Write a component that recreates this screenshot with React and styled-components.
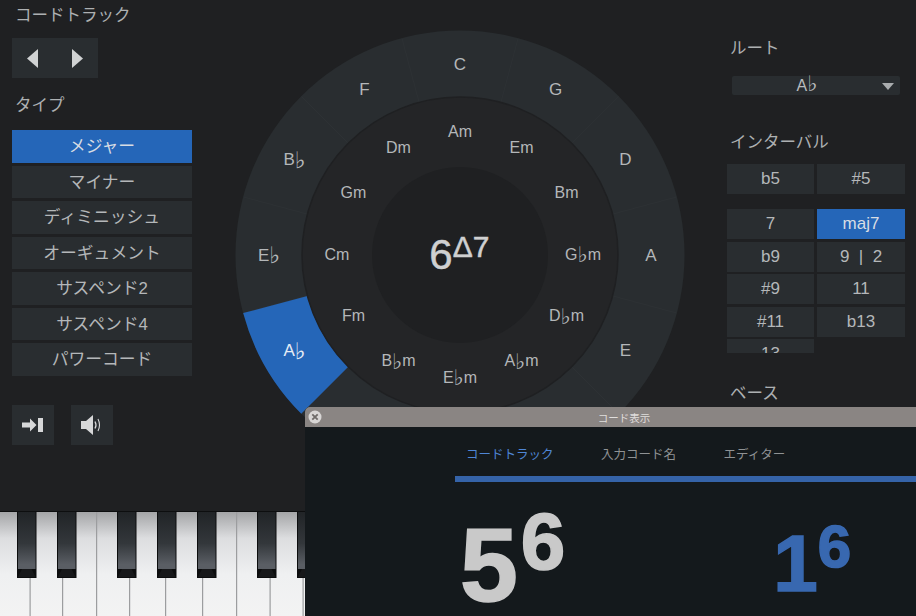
import styled, { createGlobalStyle } from "styled-components";

const GlobalStyle = createGlobalStyle`
  html, body {
    margin: 0;
    padding: 0;
    background: #1f2022;
  }
`;

const FONT = `"Liberation Sans", "DejaVu Sans", "Noto Sans CJK JP", sans-serif`;
const BLUE = "#2566b8";

const Page = styled.div`
  position: relative;
  width: 916px;
  height: 616px;
  overflow: hidden;
  display: flex;
  flex-direction: column;
  font-family: ${FONT};
  color: #b9bcbe;
  background: #1f2022;
`;

const Panel = styled.div`
  height: 511px;
  flex: none;
  display: grid;
  grid-template-columns: 180px 535px 178px;
  padding-left: 12px;
  border-bottom: 1px solid #0d0e0f;
`;

const LeftColumn = styled.div`
  display: flex;
  flex-direction: column;
`;

const RightColumn = styled.div`
  display: flex;
  flex-direction: column;
`;

const Heading = styled.div`
  font-size: 16.5px;
  line-height: 20px;
  color: #adb0b2;
  margin-left: 3px;
  margin-top: ${(p) => p.$top || 0}px;
`;

const ArrowBox = styled.div`
  width: 86px;
  height: 40px;
  margin-top: 13px;
  background: #292d30;
  display: flex;
  align-items: center;
  gap: 34px;
  padding-left: 15px;
  box-sizing: border-box;
`;

const TypeList = styled.div`
  display: flex;
  flex-direction: column;
  gap: 3px;
  margin-top: 15px;
`;

const TypeButton = styled.div`
  height: 32.5px;
  padding-bottom: 2px;
  box-sizing: border-box;
  display: flex;
  align-items: center;
  justify-content: center;
  font-size: 16.8px;
  color: ${(p) => (p.$active ? "#d8dde4" : "#b4b7b9")};
  background: ${(p) => (p.$active ? BLUE : "#292d30")};
`;

const ToolRow = styled.div`
  display: flex;
  gap: 17px;
  margin-top: 29px;
`;

const ToolButton = styled.div`
  width: 42px;
  height: 40px;
  background: #292d30;
  display: flex;
  align-items: center;
  justify-content: center;
`;

const WheelWrap = styled.div`
  padding-top: 30px;
  display: flex;
  justify-content: center;
`;

const WheelLabel = styled.text`
  font-family: ${FONT};
  font-size: ${(p) => p.$size}px;
  fill: ${(p) => p.$fill || "#b4b7b9"};
  stroke: ${(p) => (p.$heavy ? p.$fill : "none")};
  stroke-width: 0.5px;
  text-anchor: middle;
  dominant-baseline: central;
`;

const FlatSign = styled.span`
  font-size: 1.35em;
  line-height: 0;
`;

const Select = styled.div`
  position: relative;
  width: 168px;
  height: 19px;
  margin: 18px 0 0 5px;
  background: #292d30;
  border-radius: 2px;
  display: flex;
  align-items: center;
  justify-content: center;
  font-size: 16px;
  padding-right: 18px;
  box-sizing: border-box;
`;

const SelectCaret = styled.span`
  position: absolute;
  right: 6px;
  top: 7px;
  width: 0;
  height: 0;
  border-left: 6px solid transparent;
  border-right: 6px solid transparent;
  border-top: 7px solid #a9acae;
`;

const IntervalGrid = styled.div`
  display: grid;
  grid-template-columns: 87px 88px;
  grid-auto-rows: 30px;
  column-gap: 3px;
  row-gap: 2.5px;
  margin-top: ${(p) => p.$top}px;
  max-height: ${(p) => p.$clip || 400}px;
  overflow: hidden;
`;

const IntervalButton = styled.div`
  display: flex;
  align-items: center;
  justify-content: center;
  font-size: 17px;
  white-space: pre;
  color: ${(p) => (p.$active ? "#d8dde4" : "#b4b7b9")};
  background: ${(p) => (p.$active ? BLUE : "#292d30")};
`;

const Keyboard = styled.svg`
  display: block;
  flex: 1;
  width: 916px;
`;

const ChordWindow = styled.div`
  position: absolute;
  left: 305px;
  top: 407px;
  width: 638px;
  height: 209px;
  overflow: hidden;
  background: #14191c;
  border-radius: 5px 0 0 0;
  display: flex;
  flex-direction: column;
`;

const TitleBar = styled.div`
  position: relative;
  height: 20px;
  flex: none;
  background: #8a8583;
  display: flex;
  align-items: center;
  justify-content: center;
  font-size: 10.5px;
  color: #e0dedd;
`;

const CloseIcon = styled.svg`
  position: absolute;
  left: 3px;
  top: 3px;
`;

const Tabs = styled.div`
  flex: none;
  display: flex;
  gap: 47.5px;
  padding: 18px 0 0 161px;
  height: 31px;
  font-size: 12.5px;
  line-height: 20px;
`;

const Tab = styled.div`
  color: ${(p) => (p.$active ? "#4f86d6" : "#8f9294")};
`;

const TabRule = styled.div`
  flex: none;
  height: 6px;
  margin-left: 150px;
  background: #3563a8;
`;

const ChordRow = styled.div`
  display: flex;
  padding: 20px 0 0 155px;
  gap: 208px;
  font-weight: 700;
`;

const BigChord = styled.div`
  display: flex;
  align-items: flex-start;
  color: ${(p) => p.$color};
  -webkit-text-stroke: 1.6px ${(p) => p.$color};
`;

const ChordNote = styled.span`
  font-size: ${(p) => p.$size}px;
  line-height: ${(p) => p.$size}px;
  margin-top: ${(p) => p.$drop}px;
`;

const ChordSup = styled.span`
  font-size: ${(p) => p.$size}px;
  line-height: ${(p) => p.$size}px;
  margin-top: ${(p) => p.$drop}px;
  margin-left: ${(p) => p.$gap}px;
`;

const CX = 225;
const CY = 225;

const polar = (r, deg) => {
  const a = (deg * Math.PI) / 180;
  return [CX + r * Math.sin(a), CY - r * Math.cos(a)];
};

const wedge = (r1, r2, from, to) => {
  const [x1, y1] = polar(r2, from);
  const [x2, y2] = polar(r2, to);
  const [x3, y3] = polar(r1, to);
  const [x4, y4] = polar(r1, from);
  return `M${x1} ${y1}A${r2} ${r2} 0 0 1 ${x2} ${y2}L${x3} ${y3}A${r1} ${r1} 0 0 0 ${x4} ${y4}Z`;
};

const MAJORS = ["C", "G", "D", "A", "E", "", "", "", "A♭", "E♭", "B♭", "F"];
const MINORS = ["Am", "Em", "Bm", "G♭m", "D♭m", "A♭m", "E♭m", "B♭m", "Fm", "Cm", "Gm", "Dm"];
const TYPES = ["メジャー", "マイナー", "ディミニッシュ", "オーギュメント", "サスペンド2", "サスペンド4", "パワーコード"];
const TENSIONS = [
  ["7"],
  ["maj7", true],
  ["b9"],
  ["9  |  2"],
  ["#9"],
  ["11"],
  ["#11"],
  ["b13"],
  ["13"],
];

// the flat sign comes out tiny at text size, so it gets its own tspan
const withFlat = (name) =>
  name.split(/(♭)/).map((part, i) =>
    part === "♭" ? (
      <tspan key={i} fontSize="1.35em">
        ♭
      </tspan>
    ) : (
      part
    )
  );

const ChordWheel = () => (
  <svg width="450" height="450" viewBox="0 0 450 450">
    <circle cx={CX} cy={CY} r="224.5" fill="#292d30" />
    {MAJORS.map((_, i) => {
      const [x1, y1] = polar(158, i * 30 + 15);
      const [x2, y2] = polar(224, i * 30 + 15);
      return <line key={i} x1={x1} y1={y1} x2={x2} y2={y2} stroke="#2d3134" />;
    })}
    <path d={wedge(158, 224.5, 225, 255)} fill={BLUE} />
    <circle cx={CX} cy={CY} r="158" fill="#242527" stroke="#1f2022" strokeWidth="1.5" />
    <circle cx={CX} cy={CY} r="88" fill="#1f2022" />
    {MAJORS.map((name, i) => {
      if (!name) return null;
      const [x, y] = polar(191, i * 30);
      return (
        <WheelLabel key={name} x={x} y={y} $size={17} $fill={name === "A♭" ? "#e6ecf5" : undefined}>
          {withFlat(name)}
        </WheelLabel>
      );
    })}
    {MINORS.map((name, i) => {
      const [x, y] = polar(123, i * 30);
      return (
        <WheelLabel key={name} x={x} y={y - 1} $size={16}>
          {withFlat(name)}
        </WheelLabel>
      );
    })}
    <WheelLabel x={CX - 19} y={CY - 1} $size={42} $fill="#cfd0d1" $heavy>
      6
    </WheelLabel>
    <WheelLabel x={CX + 11} y={CY - 9} $size={30} $fill="#cfd0d1" $heavy>
      Δ7
    </WheelLabel>
  </svg>
);

const BLACK_KEYS = [17, 57, 117, 157, 197, 257, 297];
const WHITE_LINES = [29.5, 62, 96, 129, 165, 202, 236, 269.5, 302.5];

const PianoKeys = () => (
  <Keyboard viewBox="0 0 916 104" preserveAspectRatio="none">
    <defs>
      <linearGradient id="whiteKey" x1="0" y1="0" x2="0" y2="1">
        <stop offset="0" stopColor="#a4a5a7" />
        <stop offset="0.25" stopColor="#dcdddf" />
        <stop offset="0.6" stopColor="#eff0f1" />
        <stop offset="1" stopColor="#f3f3f3" />
      </linearGradient>
      <linearGradient id="blackKey" x1="0" y1="0" x2="0" y2="1">
        <stop offset="0" stopColor="#212427" />
        <stop offset="0.55" stopColor="#33373b" />
        <stop offset="0.92" stopColor="#5a5e64" />
      </linearGradient>
    </defs>
    <rect width="916" height="104" fill="url(#whiteKey)" />
    {WHITE_LINES.map((x) => (
      <rect key={x} x={x} y="0" width="1.2" height="104" fill="#9c9d9f" />
    ))}
    {BLACK_KEYS.map((x) => (
      <g key={x}>
        <rect x={x} y="0" width="19.5" height="66" fill="#0c0d0e" />
        <rect x={x + 1} y="0" width="17.5" height="57" fill="url(#blackKey)" />
        <path d={`M${x + 1} 65L${x + 5} 57H${x + 14.5}L${x + 18.5} 65Z`} fill="#17181a" />
      </g>
    ))}
  </Keyboard>
);

export default function App() {
  return (
    <Page>
      <GlobalStyle />
      <Panel>
        <LeftColumn>
          <Heading $top={5}>コードトラック</Heading>
          <ArrowBox>
            <svg width="11" height="19" viewBox="0 0 11 19">
              <path d="M11 0V19L0 9.5Z" fill="#d0d2d3" />
            </svg>
            <svg width="11" height="19" viewBox="0 0 11 19">
              <path d="M0 0V19L11 9.5Z" fill="#d0d2d3" />
            </svg>
          </ArrowBox>
          <Heading $top={17}>タイプ</Heading>
          <TypeList>
            {TYPES.map((t, i) => (
              <TypeButton key={t} $active={i === 0}>
                {t}
              </TypeButton>
            ))}
          </TypeList>
          <ToolRow>
            <ToolButton>
              <svg width="22" height="16" viewBox="0 0 22 16">
                <path d="M0 5.5H8V1.5L14.5 8L8 14.5V10.5H0Z" fill="#d6d7d8" />
                <rect x="16" y="1" width="5" height="14" fill="#d6d7d8" />
              </svg>
            </ToolButton>
            <ToolButton>
              <svg width="22" height="22" viewBox="0 0 22 22">
                <path d="M0 7H5L12 1V21L5 15H0Z" fill="#d6d7d8" />
                <path d="M14 7.5Q16 11 14 14.5" fill="none" stroke="#d6d7d8" strokeWidth="1.3" />
                <path d="M17 5Q20 11 17 17" fill="none" stroke="#d6d7d8" strokeWidth="1.1" />
              </svg>
            </ToolButton>
          </ToolRow>
        </LeftColumn>
        <WheelWrap>
          <ChordWheel />
        </WheelWrap>
        <RightColumn>
          <Heading $top={38}>ルート</Heading>
          <Select>
            <span>
              A<FlatSign>♭</FlatSign>
            </span>
            <SelectCaret />
          </Select>
          <Heading $top={37}>インターバル</Heading>
          <IntervalGrid $top={12}>
            <IntervalButton>b5</IntervalButton>
            <IntervalButton>#5</IntervalButton>
          </IntervalGrid>
          <IntervalGrid $top={15} $clip={144}>
            {TENSIONS.map(([label, active]) => (
              <IntervalButton key={label} $active={active}>
                {label}
              </IntervalButton>
            ))}
          </IntervalGrid>
          <Heading $top={30}>ベース</Heading>
        </RightColumn>
      </Panel>
      <PianoKeys />
      <ChordWindow>
        <TitleBar>
          <CloseIcon width="14" height="14" viewBox="0 0 14 14">
            <circle cx="7" cy="7" r="6.5" fill="#d8d6d5" />
            <path d="M4.3 4.3L9.7 9.7M9.7 4.3L4.3 9.7" stroke="#6f6b69" strokeWidth="1.8" />
          </CloseIcon>
          コード表示
        </TitleBar>
        <Tabs>
          <Tab $active>コードトラック</Tab>
          <Tab>入力コード名</Tab>
          <Tab>エディター</Tab>
        </Tabs>
        <TabRule />
        <ChordRow>
          <BigChord $color="#c9c9c9">
            <ChordNote $size={104} $drop={10.5}>5</ChordNote>
            <ChordSup $size={80} $drop={0} $gap={3}>6</ChordSup>
          </BigChord>
          <BigChord $color="#3868b0">
            <ChordNote $size={80} $drop={21.6}>1</ChordNote>
            <ChordSup $size={60} $drop={15} $gap={0}>6</ChordSup>
          </BigChord>
        </ChordRow>
      </ChordWindow>
    </Page>
  );
}
